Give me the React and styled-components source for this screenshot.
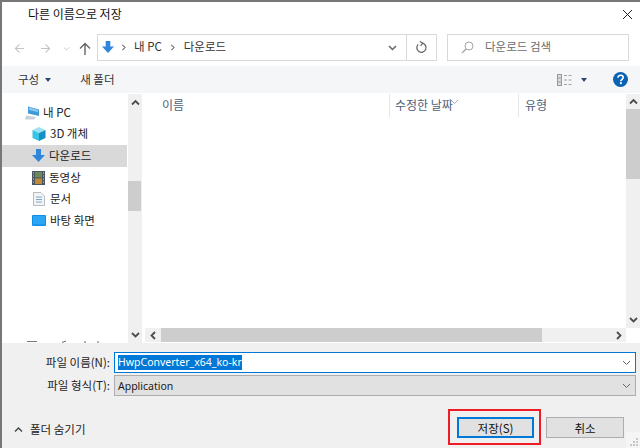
import React from 'react';
import styled, { createGlobalStyle } from 'styled-components';

const Global = createGlobalStyle`
  html, body { margin: 0; padding: 0; background: #fff; }
  body { font-family: "Noto Sans CJK KR", "Noto Sans", sans-serif; font-size: 11.5px; color: #1a1a1a; }
  * { box-sizing: border-box; }
`;

const Window = styled.div`
  position: relative; width: 640px; height: 448px; overflow: hidden;
  display: flex; flex-direction: column; background: #fff;
  border-top: 2px solid #777; border-left: 2px solid #777;
`;
const TitleBar = styled.div`
  height: 26px; flex: none; display: flex; align-items: center; justify-content: space-between;
  padding: 0 7px 2px 26px; font-size: 12px; color: #111;
`;
const TitleText = styled.span` margin-top: -1px; `;
const NavBar = styled.div`
  height: 38px; flex: none; display: flex; align-items: center; padding: 0 9px 0 0;
`;
const NavBtn = styled.div`
  width: ${p => p.$w}px; flex: none; display: flex; justify-content: center; align-items: center;
`;
const NavGroup = styled.div`
  width: 95px; flex: none; display: flex; align-items: center; padding-left: 4px; margin-top: 2px;
`;
const Field = styled.div`
  height: 27px; border: 1px solid #d9d9d9; display: flex; align-items: center; background: #fff;
`;
const Address = styled(Field)`
  width: 340px; flex: none; padding-left: 4px; color: #333;
`;
const Crumb = styled.span`
  display: flex; align-items: center;
  margin-left: ${p => p.$l || 0}px; margin-right: ${p => p.$r || 0}px;
`;
const CrumbText = styled.span` margin-top: -2px; `;
const AddrSpacer = styled.div` flex: 1; `;
const Refresh = styled.div`
  width: 30px; height: 100%; border-left: 1px solid #d9d9d9; display: flex; align-items: center; justify-content: center;
`;
const Search = styled(Field)`
  width: 182px; flex: none; margin-left: 10px; padding-left: 13px; color: #6d6d6d; gap: 11px;
`;
const Toolbar = styled.div`
  height: 27px; flex: none; margin-bottom: 1px; background: #f5f6f7; display: flex; align-items: center; color: #333;
  padding: 0 12px 0 16px;
`;
const ToolLabel = styled.span`
  margin-top: -2px; margin-right: ${p => p.$mr || 0}px;
`;
const Caret = styled.i`
  display: block; width: 0; height: 0; border: 3.5px solid transparent; border-top: 4px solid #2c4a6e; border-bottom: 0;
  margin-left: ${p => p.$ml || 0}px; margin-right: ${p => p.$mr || 0}px;
`;
const Grow = styled.div` flex: 1; `;
const Main = styled.div`
  flex: 1; min-height: 0; display: flex;
`;
const NavPane = styled.div`
  width: 126px; flex: none; overflow: hidden; padding-top: 8px; color: #222;
`;
const NavRow = styled.div`
  height: 21.6px; display: flex; align-items: center; padding-left: ${p => p.$indent}px; gap: ${p => p.$gap || 4}px;
  background: ${p => p.$active ? '#d9d9d9' : 'transparent'};
  margin-right: 1px;
`;
const NavText = styled.span` margin-top: -2px; `;
const ClippedRow = styled.div`
  margin-top: 108px; padding-left: 23px; height: 3px; display: flex;
`;
const Scrollbar = styled.div`
  width: ${p => p.$w}px; flex: none; background: #f0f0f0; display: flex; flex-direction: column; align-items: stretch;
`;
const ScrollBtn = styled.div`
  height: ${p => p.$h || 17}px; flex: none; display: flex; align-items: center; justify-content: center;
  margin-top: ${p => p.$auto ? 'auto' : 0};
`;
const VThumb = styled.div`
  flex: none; height: ${p => p.$h}px; margin-top: ${p => p.$mt}px; background: #cdcdcd; margin-right: ${p => p.$mr || 0}px;
`;
const Content = styled.div`
  flex: 1; min-width: 0; margin-left: 3px; display: flex; flex-direction: column;
`;
const ListArea = styled.div`
  flex: 1; min-height: 0; display: flex;
`;
const List = styled.div`
  flex: 1; min-width: 0;
`;
const Header = styled.div`
  position: relative; height: 23px; display: flex; color: #4c607a; font-size: 12px;
`;
const Col = styled.div`
  width: ${p => p.$w}px; flex: none; padding-left: ${p => p.$pad}px; padding-bottom: 2px; display: flex; align-items: center;
  border-right: ${p => p.$line ? '1px solid #e5e5e5' : '0'}; height: 23px;
`;
const SortMark = styled.div`
  position: absolute; left: 305px; top: -2px;
`;
const HScroll = styled.div`
  height: 14px; flex: none; display: flex; margin-bottom: 1px;
`;
const HTrack = styled.div`
  flex: 1; display: flex; align-items: stretch; background: #f0f0f0;
`;
const HBtn = styled.div`
  width: 16px; flex: none; display: flex; align-items: center; justify-content: center;
`;
const HThumb = styled.div`
  width: 381px; background: #cdcdcd; flex: none;
`;
const Corner = styled.div` width: ${p => p.$w || 14}px; flex: none; `;
const Footer = styled.div`
  height: 105px; flex: none; background: #f0f0f0; position: relative; display: flex; flex-direction: column; padding-top: 9px;
`;
const FormRow = styled.div`
  display: flex; align-items: center; height: 21px; margin-bottom: 2px;
`;
const Label = styled.div`
  width: 108px; flex: none; text-align: right; margin-right: 4px; margin-top: -2px; color: #222; font-size: 11.5px;
`;
const Combo = styled.div`
  width: 522px; flex: none; height: 21px; display: flex; align-items: center; justify-content: space-between;
  padding: 0 4px 0 3px; font-family: "Noto Sans", sans-serif; font-size: 10.5px; color: #1a1a1a;
  background: ${p => p.$focus ? '#fff' : '#e1e1e1'};
  border: 1px solid ${p => p.$focus ? '#0078d7' : '#adadad'};
`;
const Selected = styled.span`
  background: #0078d7; color: #fff; line-height: 15px; height: 15px; display: block;
`;
const Actions = styled.div`
  display: flex; align-items: flex-start; margin-top: 19px; padding-left: 12px;
`;
const Hide = styled.div`
  display: flex; align-items: center; gap: 7px; height: 20px; margin-top: 2px; color: #222; font-size: 11.5px;
`;
const Btn = styled.div`
  position: relative; width: ${p => p.$w}px; height: 21px; flex: none; display: flex; align-items: center; justify-content: center;
  background: #e1e1e1; color: #111; font-size: 11.5px;
  border: ${p => p.$primary ? '2px solid #0078d7' : '1px solid #adadad'};
  margin-left: ${p => p.$ml}px;
`;
const RedBox = styled.div`
  position: absolute; left: -11px; top: -10px; width: 93px; height: 36px; border: 2px solid #ee1c25;
`;
const Grip = styled.div`
  position: absolute; right: 0; bottom: 0; width: 14px; height: 16px; background: #f5f5f5;
  display: flex; align-items: flex-end; justify-content: flex-end; padding: 0 2px 2px 0;
`;

const Chev = ({ d, size = 9, color = '#4d4d4d', w = 1.8 }) => {
  const pts = { up: '1,6.5 4.5,3 8,6.5', down: '1,3 4.5,6.5 8,3', left: '6,1 2.5,4.5 6,8', right: '3,1 6.5,4.5 3,8' }[d];
  return (
    <svg width={size} height={size} viewBox="0 0 9 9" fill="none">
      <polyline points={pts} stroke={color} strokeWidth={w} />
    </svg>
  );
};
const ArrowLeft = ({ color }) => (
  <svg width="11" height="11" viewBox="0 0 12 12" fill="none">
    <path d="M11 6H1.5M6 1.5 1.5 6 6 10.5" stroke={color} strokeWidth="1.2" />
  </svg>
);
const ArrowRight = ({ color }) => (
  <svg width="11" height="11" viewBox="0 0 12 12" fill="none">
    <path d="M1 6h9.5M6 1.5 10.5 6 6 10.5" stroke={color} strokeWidth="1.2" />
  </svg>
);
const UpArrow = () => (
  <svg width="12" height="13" viewBox="0 0 12 13" fill="none">
    <path d="M6 13V1.5M1 6.5 6 1.5l5 5" stroke="#666" strokeWidth="1.4" />
  </svg>
);
const BlueDown = ({ s = 13 }) => (
  <svg width={s} height={s} viewBox="0 0 13 13">
    <path d="M4 0h5v6h4L6.5 13 0 6h4z" fill="#2f86dc" />
  </svg>
);
const RefreshIcon = () => (
  <svg width="13" height="13" viewBox="0 0 13 13" fill="none">
    <path d="M7.5 2.2A4.6 4.6 0 1 1 3.2 3.4" stroke="#666" strokeWidth="1.3" />
    <path d="M4.8 0.5 7.8 2.2 5.6 5" stroke="#666" strokeWidth="1.2" />
  </svg>
);
const SearchIcon = () => (
  <svg width="13" height="13" viewBox="0 0 13 13" fill="none">
    <circle cx="8" cy="5" r="4" stroke="#a5a5a5" />
    <path d="M5 8 1 12" stroke="#a5a5a5" strokeWidth="1.3" />
  </svg>
);
const CloseIcon = () => (
  <svg width="11" height="11" viewBox="0 0 11 11" fill="none">
    <path d="M1 1l9 9M10 1l-9 9" stroke="#222" strokeWidth="1" />
  </svg>
);
const ViewIcon = () => (
  <svg width="15" height="12" viewBox="0 0 15 12" fill="none">
    <rect x="0.5" y="0.5" width="4" height="11" fill="#ddd" stroke="#999" />
    <path d="M1 4h3M1 8h3" stroke="#999" />
    <path d="M7 1.5h3M11.5 1.5h3M7 6h3M11.5 6h3M7 10.5h3M11.5 10.5h3" stroke="#9aa0a6" />
  </svg>
);
const HelpIcon = () => (
  <svg width="15" height="15" viewBox="0 0 15 15">
    <circle cx="7.5" cy="7.5" r="7.5" fill="#0a62b5" />
    <path d="M5 5.7C5 4.2 6.1 3.3 7.6 3.3S10.2 4.2 10.2 5.5C10.2 7.3 7.8 7.3 7.8 9.2" fill="none" stroke="#fff" strokeWidth="1.6" />
    <rect x="6.9" y="10.2" width="1.9" height="1.9" fill="#fff" />
  </svg>
);
const PcIcon = () => (
  <svg width="16" height="14" viewBox="0 0 16 14">
    <path d="M3 0.5 14 3.5V10L3 7.5z" fill="#3f9bd8" />
    <path d="M4 1.5 13 4V6L4 4z" fill="#8ccbef" />
    <path d="M1 9.5 11 11 9 13.5H0z" fill="#c9d1d8" />
  </svg>
);
const CubeIcon = () => (
  <svg width="14" height="14" viewBox="0 0 14 14">
    <path d="M7 0 13.5 3 7 6 .5 3z" fill="#9fe2f2" />
    <path d="M.5 3 7 6v8L.5 11z" fill="#38c4e2" />
    <path d="M13.5 3 7 6v8l6.5-3z" fill="#1590c4" />
  </svg>
);
const FilmIcon = () => (
  <svg width="13" height="14" viewBox="0 0 13 14">
    <rect width="13" height="14" fill="#4a5560" />
    <rect x="3" y="1" width="7" height="5.5" fill="#6a8a5a" />
    <rect x="3" y="7.5" width="7" height="5.5" fill="#c08a3a" />
    <path d="M1 2h1M1 5h1M1 8h1M1 11h1M11 2h1M11 5h1M11 8h1M11 11h1" stroke="#ddd" />
  </svg>
);
const DocIcon = () => (
  <svg width="12" height="14" viewBox="0 0 12 14">
    <path d="M.5.5H8L11.5 4V13.5H.5z" fill="#f2f4f6" stroke="#b5bcc4" />
    <path d="M3 5h6M3 7.5h6M3 10h6" stroke="#7fa6c8" />
  </svg>
);
const DesktopIcon = () => (
  <svg width="14" height="11" viewBox="0 0 14 11">
    <rect width="14" height="11" rx="1" fill="#0d8fe8" />
    <rect x="1" y="1" width="12" height="8.5" fill="#2aa6f2" />
  </svg>
);
const ClippedMarks = () => (
  <svg width="80" height="3" viewBox="0 0 80 3">
    <path d="M2 1.5h10" stroke="#777" />
    <path d="M37 2.5 41 1M60 1v2M73 1v2" stroke="#666" />
  </svg>
);

export default function App() {
  return (
    <>
      <Global />
      <Window>
        <TitleBar>
          <TitleText>다른 이름으로 저장</TitleText>
          <CloseIcon />
        </TitleBar>
        <NavBar>
          <NavGroup>
            <NavBtn $w={26}><ArrowLeft color="#c4c4c4" /></NavBtn>
            <NavBtn $w={26}><ArrowRight color="#c4c4c4" /></NavBtn>
            <NavBtn $w={16}><Chev d="down" size={7} color="#c4c4c4" w={1.2} /></NavBtn>
            <NavBtn $w={22}><UpArrow /></NavBtn>
          </NavGroup>
          <Address>
            <BlueDown s={12} />
            <Crumb $l={6} $r={7}><Chev d="right" size={7} color="#666" w={1.3} /></Crumb>
            <CrumbText>내 PC</CrumbText>
            <Crumb $l={7} $r={8}><Chev d="right" size={7} color="#666" w={1.3} /></Crumb>
            <CrumbText>다운로드</CrumbText>
            <AddrSpacer />
            <Crumb $l={9} $r={9}><Chev d="down" color="#666" w={1.5} /></Crumb>
            <Refresh><RefreshIcon /></Refresh>
          </Address>
          <Search>
            <SearchIcon />
            <CrumbText>다운로드 검색</CrumbText>
          </Search>
        </NavBar>
        <Toolbar>
          <ToolLabel>구성</ToolLabel>
          <Caret $ml={6} $mr={29} />
          <ToolLabel>새 폴더</ToolLabel>
          <Grow />
          <ViewIcon />
          <Caret $ml={9} $mr={26} />
          <HelpIcon />
        </Toolbar>
        <Main>
          <NavPane>
            <NavRow $indent={23} $gap={2}><PcIcon /><NavText>내 PC</NavText></NavRow>
            <NavRow $indent={30}><CubeIcon /><NavText>3D 개체</NavText></NavRow>
            <NavRow $indent={30} $active><BlueDown /><NavText>다운로드</NavText></NavRow>
            <NavRow $indent={30}><FilmIcon /><NavText>동영상</NavText></NavRow>
            <NavRow $indent={31} $gap={5}><DocIcon /><NavText>문서</NavText></NavRow>
            <NavRow $indent={30}><DesktopIcon /><NavText>바탕 화면</NavText></NavRow>
            <ClippedRow><ClippedMarks /></ClippedRow>
          </NavPane>
          <Scrollbar $w={14}>
            <ScrollBtn><Chev d="up" /></ScrollBtn>
            <VThumb $h={30} $mt={70} $mr={1} />
            <ScrollBtn $auto><Chev d="down" /></ScrollBtn>
          </Scrollbar>
          <Content>
            <ListArea>
              <List>
                <Header>
                  <Col $w={245} $pad={17} $line>이름</Col>
                  <Col $w={129} $pad={5} $line>수정한 날짜</Col>
                  <Col $w={100} $pad={6}>유형</Col>
                  <SortMark><Chev d="down" size={9} color="#9aa5b0" w={1} /></SortMark>
                </Header>
              </List>
              <Scrollbar $w={14}>
                <ScrollBtn $h={15}><Chev d="up" /></ScrollBtn>
                <VThumb $h={70} $mt={0} />
                <ScrollBtn $auto><Chev d="down" /></ScrollBtn>
              </Scrollbar>
            </ListArea>
            <HScroll>
              <HTrack>
                <HBtn><Chev d="left" /></HBtn>
                <HThumb />
                <Grow />
                <HBtn><Chev d="right" /></HBtn>
              </HTrack>
              <Corner />
            </HScroll>
          </Content>
        </Main>
        <Footer>
          <FormRow>
            <Label>파일 이름(N):</Label>
            <Combo $focus>
              <Selected>HwpConverter_x64_ko-kr</Selected>
              <Chev d="down" size={9} color="#666" w={1} />
            </Combo>
          </FormRow>
          <FormRow>
            <Label>파일 형식(T):</Label>
            <Combo>
              <span>Application</span>
              <Chev d="down" size={9} color="#666" w={1} />
            </Combo>
          </FormRow>
          <Actions>
            <Hide>
              <Chev d="up" size={9} color="#444" w={1.4} />
              <span>폴더 숨기기</span>
            </Hide>
            <Grow />
            <Btn $primary $w={77} $ml={0}>저장(S)<RedBox /></Btn>
            <Btn $w={78} $ml={12}>취소</Btn>
            <Corner $w={16} />
          </Actions>
          <Grip>
            <svg width="8" height="8" viewBox="0 0 8 8"><path d="M6 0h2v2H6zM3 3h2v2H3zM6 3h2v2H6zM0 6h2v2H0zM3 6h2v2H3zM6 6h2v2H6z" fill="#c8c8c8" /></svg>
          </Grip>
        </Footer>
      </Window>
    </>
  );
}
